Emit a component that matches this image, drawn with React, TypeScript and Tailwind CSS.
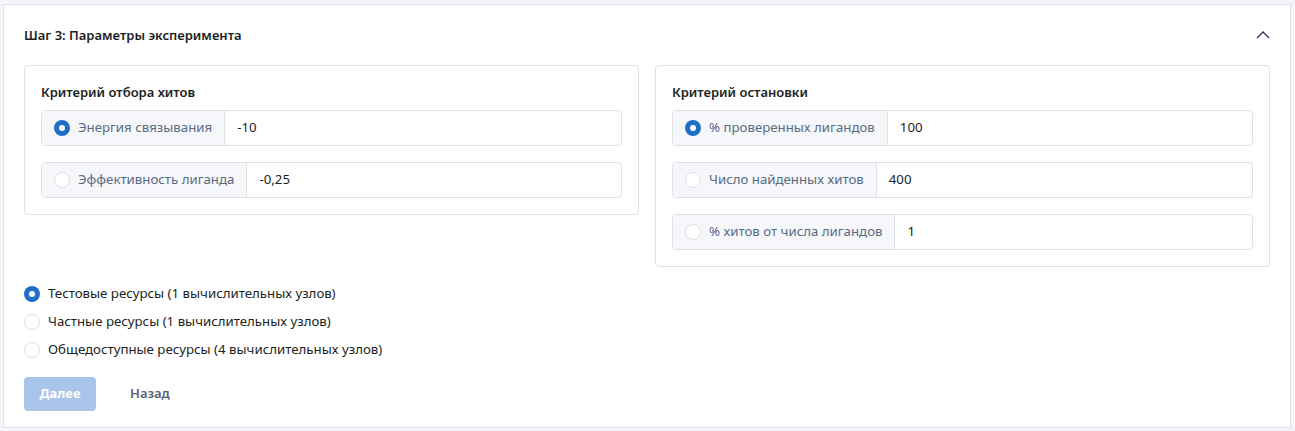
import React from "react";

function Radio({ checked }: { checked: boolean }) {
  return checked ? (
    <span className="flex h-4 w-4 shrink-0 items-center justify-center rounded-full bg-[#1f6fc8]">
      <span className="h-[6px] w-[6px] rounded-full bg-white" />
    </span>
  ) : (
    <span className="h-4 w-4 shrink-0 rounded-full border border-[#dcdfe5] bg-white" />
  );
}

function Group({ label, value, checked }: { label: string; value: string; checked: boolean }) {
  return (
    <div className="flex h-9 items-stretch rounded border border-[#dde1e7] bg-white">
      <div className="flex items-center gap-2 rounded-l border-r border-[#dde1e7] bg-[#f5f7fa] px-3">
        <Radio checked={checked} />
        <span className="whitespace-nowrap text-[13.25px] text-[#5b6b82]">{label}</span>
      </div>
      <div className="flex flex-1 items-center px-3 text-[13.25px] text-[#1c1f24]">{value}</div>
    </div>
  );
}

function Box({ title, children }: { title: string; children: React.ReactNode }) {
  return (
    <div className="rounded border border-[#dde1e7] bg-white px-4 pb-4 pt-4">
      <div className="mb-2 text-[13px] font-semibold leading-5 text-[#1c1f24]">{title}</div>
      <div className="flex flex-col gap-4">{children}</div>
    </div>
  );
}

export default function App() {
  return (
    <div
      className="min-h-[431px] bg-[#f3f5f9] pl-[3px] pt-[4px]"
      style={{ fontFamily: '"Noto Sans", "Open Sans", sans-serif' }}
    >
      <div className="h-[424px] w-[1288px] border border-[#dde1e7] bg-white px-5 pt-5">
        <div className="flex h-5 items-center justify-between">
          <div className="text-[13px] font-semibold leading-5 text-[#1c1f24]">Шаг 3: Параметры эксперимента</div>
          <svg width="14" height="8" viewBox="0 0 14 8">
            <path d="M1 7 L7 1 L13 7" fill="none" stroke="#1e3556" strokeWidth="1.3" />
          </svg>
        </div>
        <div className="mt-5 grid grid-cols-2 items-start gap-4">
          <Box title="Критерий отбора хитов">
            <Group label="Энергия связывания" value="-10" checked />
            <Group label="Эффективность лиганда" value="-0,25" checked={false} />
          </Box>
          <Box title="Критерий остановки">
            <Group label="% проверенных лигандов" value="100" checked />
            <Group label="Число найденных хитов" value="400" checked={false} />
            <Group label="% хитов от числа лигандов" value="1" checked={false} />
          </Box>
        </div>
        <div className="mt-[17px] flex flex-col gap-2">
          {[
            ["Тестовые ресурсы (1 вычислительных узлов)", true],
            ["Частные ресурсы (1 вычислительных узлов)", false],
            ["Общедоступные ресурсы (4 вычислительных узлов)", false],
          ].map(([t, c]) => (
            <div key={t as string} className="flex h-5 items-center gap-2">
              <Radio checked={c as boolean} />
              <span className="text-[13.25px] text-[#1c1f24]">{t as string}</span>
            </div>
          ))}
        </div>
        <div className="mt-[17px] flex items-center gap-[18px]">
          <button className="h-[34px] w-[72px] rounded bg-[#a9c6ea] text-[13px] font-bold text-white">Далее</button>
          <button className="h-[34px] px-4 text-[13px] font-semibold text-[#5a6170]">Назад</button>
        </div>
      </div>
    </div>
  );
}
